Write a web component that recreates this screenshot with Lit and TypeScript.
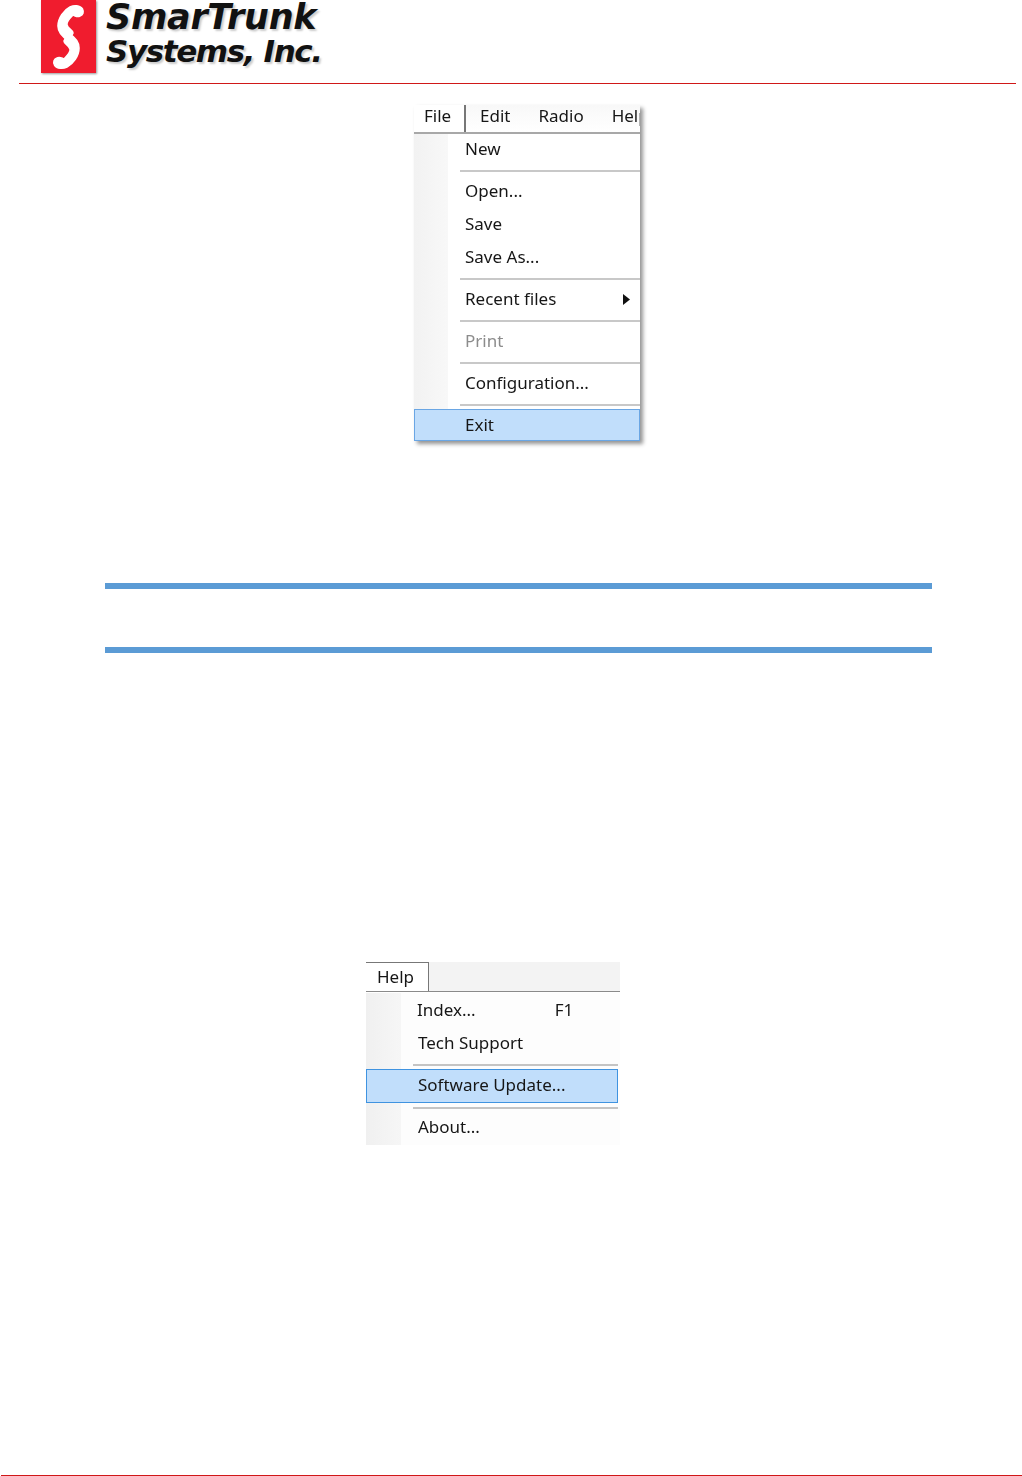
import { LitElement, html, css, svg } from "lit";
import { customElement } from "lit/decorators.js";

const handset = "M29 7 C33 5 39 5 41.5 9 C43 12 42 15 39 16 C36 17.5 34 15.5 32 15 C28 19 25 22 26 25 C27 29 32 30 32 33 L28 41 C23 38 17 33 17 26 C17 18 23 10 29 7 Z";

@customElement("app-root")
export class AppRoot extends LitElement {
  static styles = css`
    :host { display: block; width: 1022px; height: 1476px; background: #fff; overflow: hidden; font-family: "Noto Sans", sans-serif; color: #161616; }
    .page { display: flex; flex-direction: column; height: 1476px; }
    .header { display: flex; height: 83px; gap: 10px; margin: 0 6px 0 19px; padding-left: 22px; border-bottom: 1px solid #d01818; }
    .logo-mark { width: 55px; height: 73px; display: block; box-shadow: 1px 1px 2px #999; flex: none; }
    .handset { fill: #fff; stroke: #fff; stroke-width: 1.6; stroke-linejoin: round; }
    .wordmark { font-family: "DejaVu Sans", sans-serif; font-weight: bold; font-style: italic; color: #111; text-shadow: 2px 2px 2px #ccc; white-space: nowrap; display: flex; flex-direction: column; }
    .w1 { font-size: 35px; line-height: 35px; letter-spacing: -0.3px; }
    .w2 { font-size: 31px; line-height: 33px; letter-spacing: -1.4px; }

    .shot { font-size: 17px; line-height: 33px; filter: blur(0.35px); }
    .file { margin: 21px 0 0 414px; width: 226px; background: #fff; box-shadow: 3px 3px 4px rgba(0,0,0,.42); }
    .bar { display: flex; overflow: hidden; white-space: nowrap; background: linear-gradient(#f8f8f8, #fff); }
    .file .bar { height: 27px; line-height: 22px; border-bottom: 2px solid #a8a8a8; }
    .tab { flex: none; box-sizing: border-box; }
    .file .tab { width: 52px; padding-left: 10px; border-right: 2px solid #777; margin-right: 14px; background: #fff; margin-bottom: -2px; }
    .bar-item { margin-right: 28px; }
    .body { display: flex; flex-direction: column; background: linear-gradient(90deg, #f2f2f2 0, #f8f8f8 34px, #fff 34px); }
    .row { height: 33px; padding-left: 51px; }
    .file .first { height: 31px; line-height: 29px; }
    .sep { height: 9px; margin-left: 46px; box-sizing: border-box; padding-top: 5px; }
    .sep::before { content: ""; display: block; height: 2px; background: #c8c8c8; }
    .disabled { color: #8c8c8c; }
    .sub { display: flex; justify-content: space-between; align-items: center; padding-right: 10px; }
    .arrow { width: 7px; height: 11px; display: block; margin-top: 2px; }
    .hl { background: #c1defb; border: 1px solid #6aa6e4; box-sizing: border-box; height: 32px; line-height: 30px; padding-left: 50px; margin-top: 1px; }

    .rule { height: 6px; background: #5b9bd5; margin: 0 90px 0 105px; flex: none; }
    .rule.one { margin-top: 142px; }
    .rule.two { margin-top: 58px; }

    .help { margin: 309px 0 0 366px; width: 254px; }
    .help .bar { height: 30px; line-height: 28px; background: #f3f3f3; border-bottom: 1px solid #8a8a8a; box-sizing: border-box; }
    .help .tab { width: 63px; padding-left: 11px; background: #fff; border: 1px solid #777; border-width: 1px 1px 0 0; height: 30px; }
    .help .body { border-top: 1px solid #fff; background: linear-gradient(90deg, #f0f0f0 0, #f6f6f6 35px, #fdfdfd 35px); }
    .help .row { padding-left: 52px; height: 34px; line-height: 34px; display: flex; }
    .help .first { height: 33px; line-height: 33px; padding-left: 51px; }
    .help .row .key { margin-left: 79px; }
    .help .sep { margin: 0 2px 0 47px; height: 9px; padding-top: 4px; }
    .help .sep::before { background: #c4c4c4; }
    .help .hl { margin: 0 2px 0 0; height: 34px; line-height: 30px; padding-left: 51px; border: 1px solid #3f93e0; }
    .help .tail { height: 33px; line-height: 29px; }
    .spacer { flex: 1; }
    .footer { height: 1px; margin: 0 0 0 1px; background: #d01818; flex: none; }
  `;

  render() {
    return html`<div class="page">
      <header class="header">
        <svg class="logo-mark" viewBox="0 0 55 73">
          <rect width="55" height="73" fill="#f01c2e"></rect>
          ${svg`<path class="handset" d=${handset}></path><path class="handset" transform="rotate(180 27.5 37)" d=${handset}></path>`}
        </svg>
        <div class="wordmark"><div class="w1">SmarTrunk</div><div class="w2">Systems, Inc.</div></div>
      </header>

      <section class="shot file">
        <div class="bar"><div class="tab">File</div><div class="bar-item">Edit</div><div class="bar-item">Radio</div><div class="bar-item">Help</div></div>
        <div class="body">
          <div class="row first">New</div><div class="sep"></div>
          <div class="row">Open...</div><div class="row">Save</div><div class="row">Save As...</div><div class="sep"></div>
          <div class="row sub"><span>Recent files</span><svg class="arrow" viewBox="0 0 7 11"><path d="M0 0 L7 5.5 L0 11 Z" fill="#111"></path></svg></div><div class="sep"></div>
          <div class="row disabled">Print</div><div class="sep"></div>
          <div class="row">Configuration...</div><div class="sep"></div>
          <div class="hl">Exit</div>
        </div>
      </section>

      <div class="rule one"></div>
      <div class="rule two"></div>

      <section class="shot help">
        <div class="bar"><div class="tab">Help</div></div>
        <div class="body">
          <div class="row first"><span>Index...</span><span class="key">F1</span></div>
          <div class="row">Tech Support</div><div class="sep"></div>
          <div class="hl">Software Update...</div><div class="sep"></div>
          <div class="row tail">About...</div>
        </div>
      </section>
      <div class="spacer"></div>
      <div class="footer"></div>
    </div>`;
  }
}
